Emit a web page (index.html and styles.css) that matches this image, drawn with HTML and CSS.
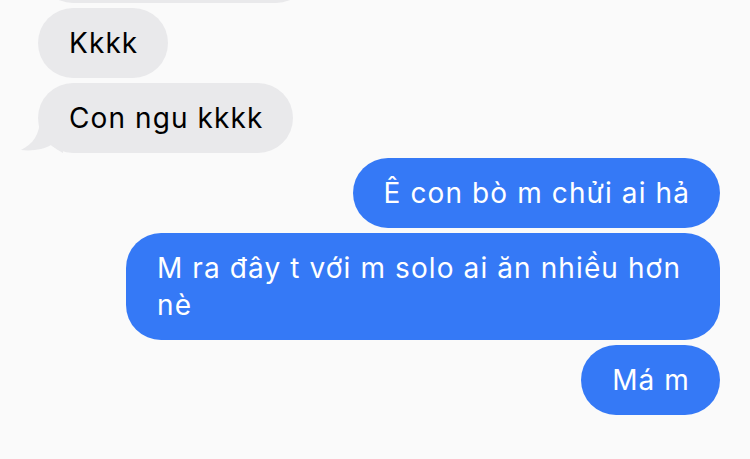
FILE: index.html
```html
<!DOCTYPE html>
<html lang="vi">
<head>
<meta charset="utf-8">
<title>Messages</title>
<link rel="stylesheet" href="styles.css">
</head>
<body>
<div class="chat">
  <div class="bubble recv clipped"></div>
  <div class="bubble recv">Kkkk</div>
  <div class="bubble recv tailed">Con ngu kkkk
    <svg class="tail" width="45" height="40" viewBox="0 0 45 40" aria-hidden="true"><path d="M22 4 C22 22 15 31 3 37 C15 38.5 26 36 33 32 C37 35 41 38 45 40 L45 4 Z" fill="#e9e9eb"/></svg>
  </div>
  <div class="bubble sent">Ê con bò m chửi ai hả</div>
  <div class="bubble sent">M ra đây t với m solo ai ăn nhiều hơn nè</div>
  <div class="bubble sent">Má m</div>
</div>
</body>
</html>
```
FILE: styles.css
```css
html, body {
  margin: 0;
  padding: 0;
  background: #fafafa;
  height: 100%;
  overflow: hidden;
}
.chat {
  display: flex;
  flex-direction: column;
  gap: 5px;
  margin-top: -67px;
  padding: 0 30px 0 38px;
  font-family: "Inter", "Noto Sans", sans-serif;
  font-size: 28px;
  letter-spacing: 1.1px;
  line-height: 37px;
}
.bubble {
  position: relative;
  box-sizing: border-box;
  min-height: 70px;
  padding: 16.5px 30px 16.5px 31px;
  border-radius: 35px;
  max-width: 594px;
}
.recv {
  align-self: flex-start;
  background: #e9e9eb;
  color: #000;
}
.sent {
  align-self: flex-end;
  background: #3579f6;
  color: #fff;
}
.clipped {
  width: 273px;
}
.tail {
  position: absolute;
  left: -20px;
  bottom: 0;
}
```
